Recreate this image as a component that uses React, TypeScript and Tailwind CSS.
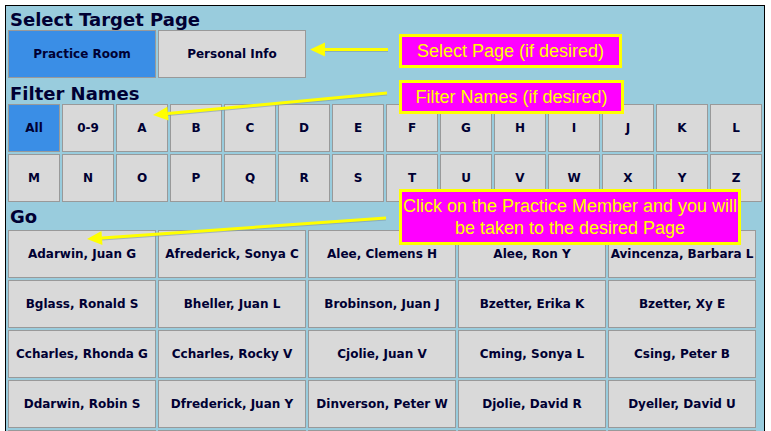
const letters = ["All", "0-9", "A", "B", "C", "D", "E", "F", "G", "H", "I", "J", "K", "L"];
const letters2 = ["M", "N", "O", "P", "Q", "R", "S", "T", "U", "V", "W", "X", "Y", "Z"];

const members = [
  "Adarwin, Juan G",
  "Afrederick, Sonya C",
  "Alee, Clemens H",
  "Alee, Ron Y",
  "Avincenza, Barbara L",
  "Bglass, Ronald S",
  "Bheller, Juan L",
  "Brobinson, Juan J",
  "Bzetter, Erika K",
  "Bzetter, Xy E",
  "Ccharles, Rhonda G",
  "Ccharles, Rocky V",
  "Cjolie, Juan V",
  "Cming, Sonya L",
  "Csing, Peter B",
  "Ddarwin, Robin S",
  "Dfrederick, Juan Y",
  "Dinverson, Peter W",
  "Djolie, David R",
  "Dyeller, David U",
];

// next row only peeks in at the bottom edge
const nextRow = [0, 1, 2, 3, 4];

const Arrow = ({ x1, y1, x2, y2 }: { x1: number; y1: number; x2: number; y2: number }) => {
  const dx = x2 - x1;
  const dy = y2 - y1;
  const len = Math.hypot(dx, dy);
  const ux = dx / len;
  const uy = dy / len;
  const bx = x2 - ux * 15;
  const by = y2 - uy * 15;
  const px = -uy * 7;
  const py = ux * 7;
  const head = `${x2},${y2} ${bx + px},${by + py} ${bx - px},${by - py}`;
  return (
    <g>
      <line x1={x1} y1={y1 + 1.5} x2={bx} y2={by + 1.5} stroke="#7f9aa8" strokeOpacity="0.6" strokeWidth="2" />
      <line x1={x1} y1={y1} x2={bx} y2={by} stroke="#ffff00" strokeWidth="3" />
      <polygon points={head} fill="#ffff00" />
    </g>
  );
};

const Heading = ({ children, className }: { children: string; className?: string }) => (
  <h2 className={`pl-[2px] text-[18px] leading-[21px] font-bold text-[#000033] ${className ?? ""}`}>{children}</h2>
);

const Btn = ({ label, active, className }: { label: string; active?: boolean; className: string }) => (
  <button
    className={`h-[48px] border border-[#999999] text-[12px] font-bold text-[#000033] ${
      active ? "bg-[#3a8ee6]" : "bg-[#d9d9d9]"
    } ${className}`}
  >
    {label}
  </button>
);

export default function App() {
  return (
    <div className="relative h-[431px] w-[771px] overflow-hidden bg-white pl-[5px] pt-[5px] font-['DejaVu_Sans',sans-serif]">
      <div className="w-[760px] border border-black bg-[#99ccdd] pl-[2px] pt-[3px]">
        <Heading>Select Target Page</Heading>
        <div className="flex gap-[2px]">
          <Btn label="Practice Room" active className="w-[148px]" />
          <Btn label="Personal Info" className="w-[148px]" />
        </div>

        <Heading className="mt-[5px]">Filter Names</Heading>
        <div className="flex flex-col gap-[2px]">
          <div className="flex gap-[2px]">
            {letters.map((l) => (
              <Btn key={l} label={l} active={l === "All"} className="w-[52px]" />
            ))}
          </div>
          <div className="flex gap-[2px]">
            {letters2.map((l) => (
              <Btn key={l} label={l} className="w-[52px]" />
            ))}
          </div>
        </div>

        <Heading className="mb-[3px] mt-[4px]">Go</Heading>
        <div className="grid w-[748px] grid-cols-5 gap-[2px]">
          {members.map((m) => (
            <Btn key={m} label={m} className="w-[148px]" />
          ))}
          {nextRow.map((i) => (
            <div key={i} className="h-[48px] w-[148px] border border-[#999999] bg-[#d9d9d9]" />
          ))}
        </div>
      </div>

      <svg className="pointer-events-none absolute left-0 top-0" width="771" height="431">
        <Arrow x1={388} y1={49.5} x2={310} y2={49.5} />
        <Arrow x1={387} y1={93} x2={153} y2={115} />
        <Arrow x1={386} y1={218} x2={87} y2={239} />
      </svg>

      <div className="absolute left-[399px] top-[34px] flex h-[34px] w-[223px] items-center justify-center border-[3px] border-[#ffff00] bg-[#ff00ff] font-['Liberation_Sans',sans-serif] text-[18px] text-[#ffff00]">
        Select Page (if desired)
      </div>
      <div className="absolute left-[399px] top-[80px] flex h-[34px] w-[225px] items-center justify-center border-[3px] border-[#ffff00] bg-[#ff00ff] font-['Liberation_Sans',sans-serif] text-[18px] text-[#ffff00]">
        Filter Names (if desired)
      </div>
      <div className="absolute left-[399px] top-[189px] flex h-[56px] w-[342px] items-center justify-center border-[3px] border-[#ffff00] bg-[#ff00ff] text-center font-['Liberation_Sans',sans-serif] text-[18px] leading-[22px] text-[#ffff00]">
        <span>
          Click on the Practice Member and you will
          <br />
          be taken to the desired Page
        </span>
      </div>
    </div>
  );
}
